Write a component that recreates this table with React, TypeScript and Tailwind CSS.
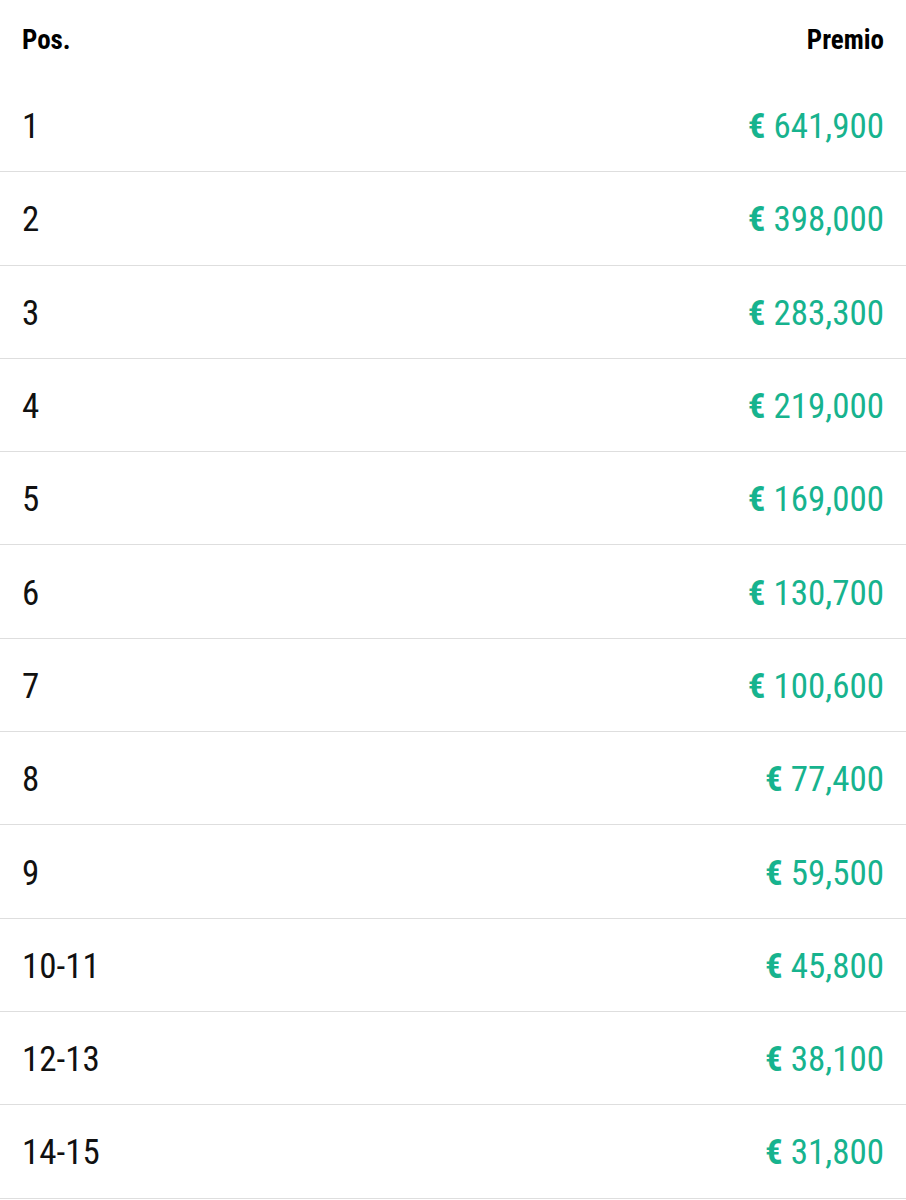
const prizes = [
  { pos: '1', amount: '641,900' },
  { pos: '2', amount: '398,000' },
  { pos: '3', amount: '283,300' },
  { pos: '4', amount: '219,000' },
  { pos: '5', amount: '169,000' },
  { pos: '6', amount: '130,700' },
  { pos: '7', amount: '100,600' },
  { pos: '8', amount: '77,400' },
  { pos: '9', amount: '59,500' },
  { pos: '10-11', amount: '45,800' },
  { pos: '12-13', amount: '38,100' },
  { pos: '14-15', amount: '31,800' },
];

export default function App() {
  return (
    <div className="w-[906px] h-[1200px] bg-white overflow-hidden font-['Roboto',sans-serif] font-stretch-condensed">
      {/* header */}
      <div className="h-[79px] flex items-start justify-between px-[22px] pt-[27px] text-[27px] font-bold text-black leading-none">
        <span>Pos.</span>
        <span>Premio</span>
      </div>

      {prizes.map((p) => (
        <div
          key={p.pos}
          className="h-[93.3px] flex items-center justify-between px-[22px] pt-[3px] border-b border-[#dedede] text-[35px] leading-none"
        >
          <span className="text-[#111]">{p.pos}</span>
          <span className="text-[#17b38e]">
            <span className="font-bold">€</span> {p.amount}
          </span>
        </div>
      ))}
    </div>
  );
}
